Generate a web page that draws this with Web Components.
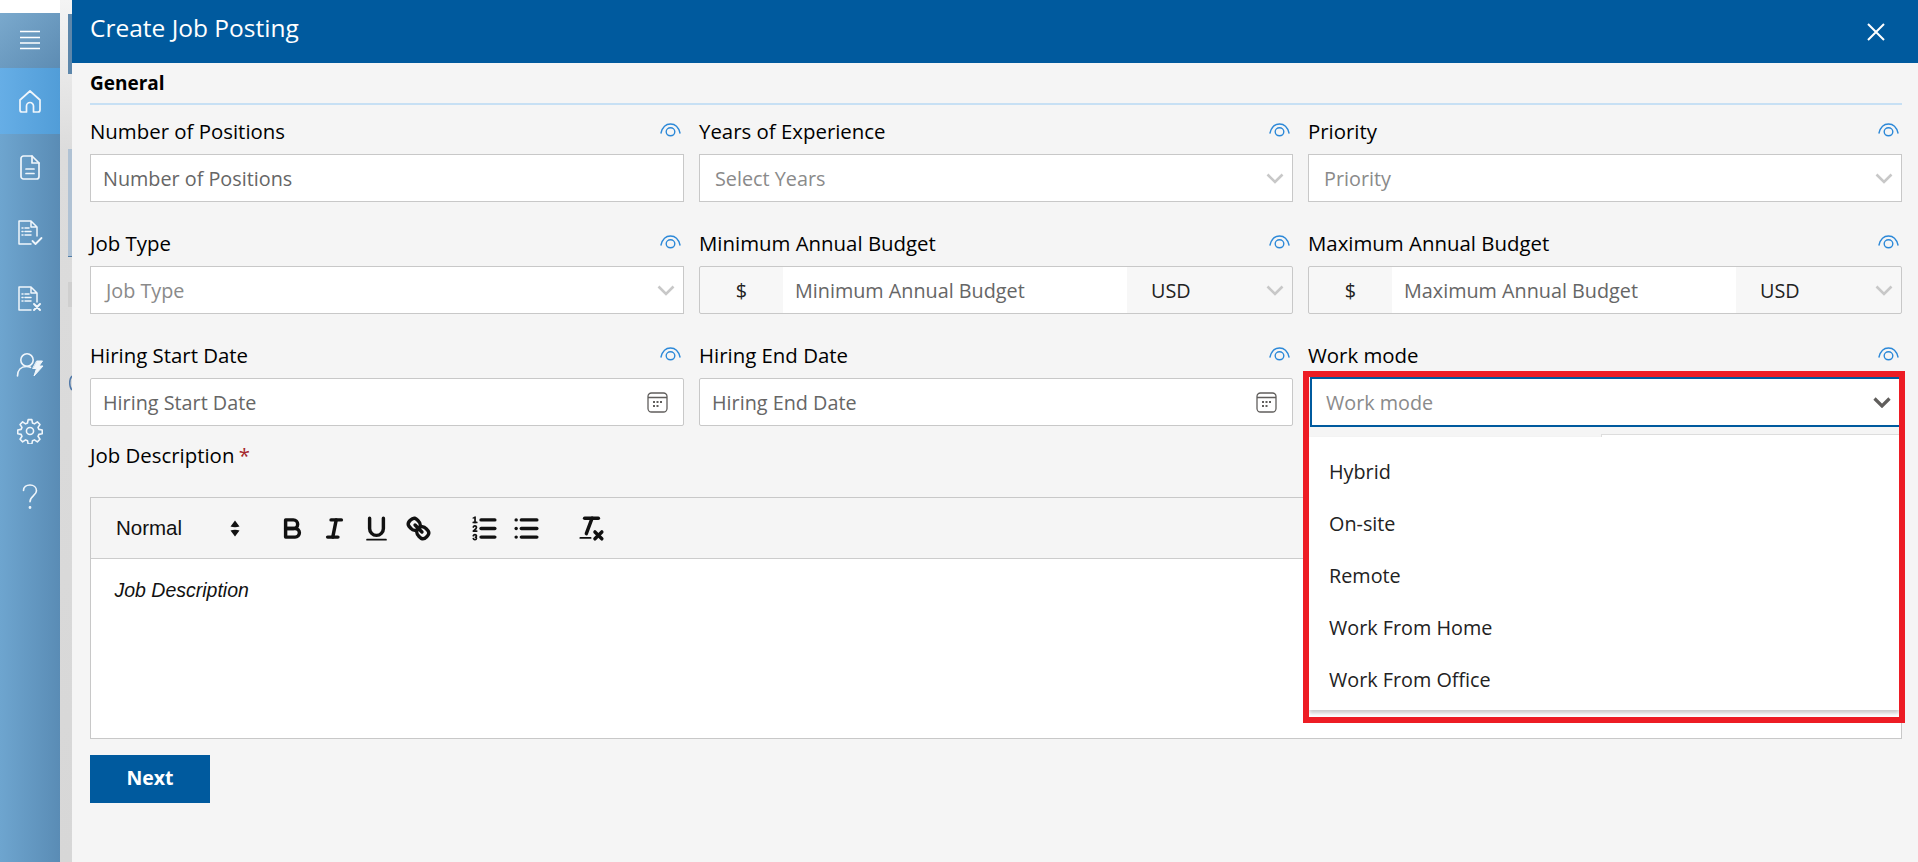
<!DOCTYPE html>
<html lang="en"><head><meta charset="utf-8"><title>Create Job Posting</title>
<style>
html,body{margin:0;height:100%;overflow:hidden;background:#fff}
body{font-family:"Open Sans","Noto Sans",sans-serif;font-size:19.8px;color:#111}
</style></head><body>
<job-app></job-app>
<script>
const S='fill="none" stroke="currentColor" stroke-linecap="round" stroke-linejoin="round"';
function def(name,css,html,init){
  customElements.define(name,class extends HTMLElement{
    constructor(){super();this.attachShadow({mode:'open'});}
    connectedCallback(){
      const g=a=>this.getAttribute(a)||'';
      this.shadowRoot.innerHTML='<style>'+css+'</style>'+(typeof html==='function'?html(g):html);
      if(init)init.call(this);
    }
  });
}
const ICONS={
 menu:'<svg width="22" height="20" viewBox="0 0 22 20" fill="none" stroke="currentColor" stroke-width="1.6" style="margin-top:-2px"><path d="M1 1.5h20M1 7.5h20M1 13h20M1 18.5h20"/></svg>',
 home:`<svg width="24" height="24" viewBox="0 0 24 24" ${S} stroke-width="1.7"><path d="M2 11 12 2l10 9v10a2 2 0 0 1-2 2h-4.500v-6a3.500 3.500 0 0 0-7 0v6H4a2 2 0 0 1-2-2z"/></svg>`,
 doc:`<svg width="20" height="25" viewBox="0 0 20 25" ${S} stroke-width="1.7"><path d="M12 1H3.500A2.500 2.500 0 0 0 1 3.500v18A2.500 2.500 0 0 0 3.500 24h13a2.500 2.500 0 0 0 2.500-2.500V8z"/><path d="M12 1v7h7M6 14h8M6 18.500h8"/></svg>`,
 check:`<svg width="26" height="26" viewBox="0 0 26 26" ${S} stroke-width="1.5"><path d="M14 1H2v23h12M14 1l6 6v9M14 1v6h6"/><path d="M5 8h1M8 8h4M5 11.500h1M8 11.500h6M5 15h1M8 15h6"/><path d="m15.500 21 3 3 6-6" stroke-width="1.800"/></svg>`,
 cross:`<svg width="26" height="26" viewBox="0 0 26 26" ${S} stroke-width="1.5"><path d="M14 1H2v23h12M14 1l6 6v9M14 1v6h6"/><path d="M5 8h1M8 8h4M5 11.500h1M8 11.500h6M5 15h1M8 15h6"/><path d="m17 18 6 6m0-6-6 6" stroke-width="2"/></svg>`,
 user:`<svg width="28" height="26" viewBox="0 0 28 26" ${S} stroke-width="1.6"><circle cx="11" cy="8" r="6.200"/><path d="M1.500 24c0-6 3.500-9.500 9-9.500 1.500 0 2.800.3 4 .8"/><path d="M21 9h5.500l-3.500 5h4l-9 10 2.500-7.500h-3.500z" fill="currentColor" stroke-width="1"/></svg>`,
 gear:`<svg width="26" height="26" viewBox="0 0 24 24" ${S} stroke-width="1.450"><circle cx="12" cy="12" r="3.300"/><path d="M10.300 1.500h3.400l.6 3.100 1.800.8 2.700-1.800 2.400 2.400-1.800 2.700.8 1.800 3.100.6v3.400l-3.100.6-.8 1.800 1.800 2.700-2.400 2.400-2.700-1.800-1.800.8-.6 3.100h-3.400l-.6-3.100-1.800-.8-2.700 1.800-2.400-2.400 1.800-2.700-.8-1.800-3.100-.6v-3.400l3.100-.6.800-1.800-1.800-2.700 2.400-2.400 2.700 1.800 1.800-.8z"/></svg>`,
 help:`<svg width="16" height="26" viewBox="0 0 16 26" ${S} stroke-width="1.6"><path d="M1.500 6.500C1.500 3 4.500 1 8 1s6.500 2.200 6.500 5.800c0 4.700-6.500 5.200-6.500 11"/><circle cx="8" cy="23.500" r=".6" fill="currentColor"/></svg>`,
 close:'<svg width="18" height="18" viewBox="0 0 18 18" fill="none" stroke="currentColor" stroke-width="2"><path d="m1 1 16 16M17 1 1 17"/></svg>',
 eye:'<svg width="21" height="14" viewBox="0 0 21 14" fill="none" stroke="#2b88d8" stroke-width="1.400" stroke-linecap="round"><path d="M1 10C2.500 4 6 1 10.500 1s8 3 9.500 9"/><ellipse cx="10.500" cy="8.800" rx="4.300" ry="4"/></svg>',
 cal:'<svg width="21" height="21" viewBox="0 0 21 21" fill="none" stroke="#605e5c" stroke-width="1.300"><rect x="1" y="1" width="19" height="19" rx="3.500"/><path d="M1 5.500h19"/><g fill="#605e5c" stroke="none"><rect x="6" y="9" width="2" height="2"/><rect x="9.500" y="9" width="2" height="2"/><rect x="13" y="9" width="2" height="2"/><rect x="6" y="13" width="2" height="2"/><rect x="9.500" y="13" width="2" height="2"/></g></svg>',
};
const chev=(c,w)=>`<svg width="18" height="11" viewBox="0 0 18 11" fill="none" stroke="${c}" stroke-width="${w||2.6}"><path d="m1.500 1.500 7.500 7.500 7.500-7.500"/></svg>`;
const Q=(inner)=>`<svg width="31" height="31" viewBox="0 0 18 18" fill="none" stroke="#111" stroke-width="2" stroke-linecap="round" stroke-linejoin="round">${inner}</svg>`;
const QL={
 bold:'<path d="M5,4H9.500A2.500,2.500,0,0,1,12,6.500v0A2.500,2.500,0,0,1,9.500,9H5V4Z"/><path d="M5,9h5.500A2.500,2.500,0,0,1,13,11.500v0A2.500,2.500,0,0,1,10.500,14H5V9Z"/>',
 italic:'<line x1="7" x2="13" y1="4" y2="4"/><line x1="5" x2="11" y1="14" y2="14"/><line x1="8" x2="10" y1="14" y2="4"/>',
 underline:'<path d="M5,3V9a4.012,4.012,0,0,0,4,4H9a4.012,4.012,0,0,0,4-4V3"/><rect fill="#111" stroke="none" height="1" rx=".5" ry=".5" width="12" x="3" y="15"/>',
 link:'<line x1="7" x2="11" y1="7" y2="11"/><path d="M8.900,4.577a3.476,3.476,0,0,1,.36,4.679A3.476,3.476,0,0,1,4.577,8.900C3.185,7.500,2.035,6.400,4.217,4.217S7.500,3.185,8.900,4.577Z"/><path d="M13.423,9.100a3.476,3.476,0,0,0-4.679-.36,3.476,3.476,0,0,0,.36,4.679c1.392,1.392,2.500,2.542,4.679.36S14.815,10.500,13.423,9.100Z"/>',
 ol:'<line x1="7" x2="15" y1="4" y2="4"/><line x1="7" x2="15" y1="9" y2="9"/><line x1="7" x2="15" y1="14" y2="14"/><line stroke-width="1" x1="2.500" x2="4.500" y1="5.500" y2="5.500"/><path fill="#111" stroke="none" d="M3.500,6A0.500,0.500,0,0,1,3,5.500V3.085l-0.276.138A0.500,0.500,0,0,1,2.053,3c-0.124-.247-0.023-0.324.224-0.447l1-.5A0.500,0.500,0,0,1,4,2.500v3A0.500,0.500,0,0,1,3.500,6Z"/><path stroke-width="1" d="M4.500,10.500h-2c0-.234,1.850-1.076,1.850-2.234A0.959,0.959,0,0,0,2.500,8.156"/><path stroke-width="1" d="M2.500,14.846a0.959,0.959,0,0,0,1.850-.109A0.700,0.700,0,0,0,3.750,14a0.688,0.688,0,0,0,.6-0.736,0.959,0.959,0,0,0-1.850-.109"/>',
 ul:'<line x1="6" x2="15" y1="4" y2="4"/><line x1="6" x2="15" y1="9" y2="9"/><line x1="6" x2="15" y1="14" y2="14"/><line x1="3" x2="3" y1="4" y2="4"/><line x1="3" x2="3" y1="9" y2="9"/><line x1="3" x2="3" y1="14" y2="14"/>',
 clean:'<line x1="5" x2="13" y1="3" y2="3"/><line x1="6" x2="9.350" y1="12" y2="3"/><line x1="11" x2="15" y1="11" y2="15"/><line x1="15" x2="11" y1="11" y2="15"/><rect fill="#111" stroke="none" height="1" rx=".5" ry=".5" width="7" x="2" y="14"/>',
};

def('nav-item',`
 :host{display:flex;align-items:center;justify-content:center;height:66px;color:#f0f6fb}
 :host([active]){background:linear-gradient(90deg,#66aee6,#519dd8)}
 :host([head]){height:55px;background:linear-gradient(135deg,#7aa9cd,#5d8cb3);color:#fff}
`,g=>ICONS[g('icon')]);

def('side-nav',`
 :host{display:block;width:60px;flex:none;margin-top:13px;background:linear-gradient(90deg,#6ea5cf,#5a8cb5)}
`,`<nav-item head icon="menu"></nav-item><nav-item active icon="home"></nav-item><nav-item icon="doc"></nav-item><nav-item icon="check"></nav-item><nav-item icon="cross"></nav-item><nav-item icon="user"></nav-item><nav-item icon="gear"></nav-item><nav-item icon="help"></nav-item>`);

def('back-gutter',`
 :host{display:flex;flex-direction:column;width:12px;flex:none;background:linear-gradient(180deg,#f4f4f4 0,#dcdcdc 150px,#d7d7d7 100%)}
 .a{height:14px}
 .r{margin-left:8px;background:#5d87ab;height:60px}
 .m{height:75px}
 .l{margin-left:8px;background:#b0c2d4;height:107px;border-bottom:1px solid #4f7ba5}
 .g{height:25px}
 .b{margin-left:8px;background:#cfcfcf;height:25px}
 .h{height:68px}
 svg{display:block;margin-left:8px}
`,`<div class="a"></div><div class="r"></div><div class="m"></div><div class="l"></div><div class="g"></div><div class="b"></div><div class="h"></div><svg width="4" height="16" viewBox="0 0 4 16" fill="none" stroke="#4f78a8" stroke-width="1.500"><path d="M4 1C1 4 1 12 4 15"/></svg>`);

def('panel-header',`
 :host{display:flex;align-items:center;justify-content:space-between;height:63px;background:#005a9e;color:#fff;padding:0 33px 6px 18px;box-sizing:border-box;flex:none}
 h1{margin:0;font:400 24.500px/1 "Open Sans",sans-serif}
 span{display:flex;margin-top:6px}
`,`<h1><slot></slot></h1><span>${ICONS.close}</span>`);

def('section-head',`
 :host{display:block;height:40px;border-bottom:2px solid #c7e0f4;font-weight:700;font-size:19px;line-height:41px;color:#000}
`,`<slot></slot>`);

def('form-field',`
 :host{display:block;position:relative}
 .l{display:flex;justify-content:space-between;align-items:center;height:38px;margin-bottom:4px;color:#000;padding-right:3px;font-size:20.400px}
 .l b{font-weight:400}
 .l span{display:flex;margin-top:-3px}
`,g=>`<div class="l"><b></b><span>${ICONS.eye}</span></div><slot></slot>`,function(){this.shadowRoot.querySelector('b').textContent=this.getAttribute('label');});

const boxCss=`
 :host{display:flex;align-items:center;height:48px;box-sizing:border-box;background:#fff;border:1.500px solid #c8c8c8;color:#666;overflow:hidden}
 .t{flex:1;white-space:nowrap}
 svg{flex:none}
`;
def('text-box',boxCss+':host{padding-left:12px}',g=>`<span class="t">${g('text')}</span>`);
def('date-box',boxCss+':host{padding:0 15px 0 12px;border-radius:2px}',g=>`<span class="t">${g('text')}</span>${ICONS.cal}`);
def('select-box',boxCss+':host{padding:0 8px 0 15px;color:#8a8a8a}:host([open]){border:2px solid #005a9e;border-right:0;padding:0 11px 0 14px;height:50px;margin-top:-1px;margin-left:2px}',g=>`<span class="t">${g('text')}</span>`,function(){const o=this.hasAttribute('open');this.shadowRoot.innerHTML+=chev(o?'#605e5c':'#c8c8c8',o?3.2:2.6);});
def('money-box',boxCss+`
 :host{background:#f7f7f7;border-radius:2px}
 .c{width:83px;text-align:center;color:#222;flex:none}
 .i{width:344px;flex:none;background:#fff;align-self:stretch;display:flex;align-items:center;padding-left:12px;box-sizing:border-box;white-space:nowrap}
 .u{flex:1;padding-left:24px;color:#222}
 svg{margin-right:8px}
`,g=>`<span class="c">$</span><span class="i">${g('text')}</span><span class="u">USD</span>${chev('#c8c8c8')}`);

def('rich-editor',`
 :host{display:block;height:242px;box-sizing:border-box;border:1.500px solid #c8c8c8;background:#fff;font-family:"Liberation Sans",Arial,sans-serif;font-size:20.500px;color:#111}
 .tb{display:flex;align-items:center;height:61px;box-sizing:border-box;background:#f5f5f5;border-bottom:1.500px solid #ccc;padding-left:25px}
 .p{width:130px;display:flex;justify-content:space-between;align-items:center;padding-right:6px;box-sizing:border-box;margin-right:31px}
 .g{display:flex;gap:11px;margin-right:35px}
 .g svg{display:block}
 .e{padding:19px 0 0 23.500px;font-style:italic;line-height:24px;font-size:19.500px}
`,`<div class="tb"><div class="p"><span>Normal</span><svg width="10" height="17" viewBox="0 0 10 17" fill="#111"><path d="M5 .5 9.500 6.500Q5 8 .5 6.500zM5 16.500.5 10.500Q5 9 9.500 10.500z"/></svg></div>
 <div class="g">${Q(QL.bold)}${Q(QL.italic)}${Q(QL.underline)}${Q(QL.link)}</div>
 <div class="g" style="margin-right:34px">${Q(QL.ol)}${Q(QL.ul)}</div>
 <div class="g">${Q(QL.clean)}</div></div><div class="e">Job Description</div>`);

def('drop-menu',`
 :host{display:block;position:absolute;left:1px;top:101px;width:590px;height:273px;background:#fff;box-shadow:0 3px 4px rgba(0,0,0,.22);padding-top:8px;box-sizing:border-box;z-index:2}
 :host::before{content:"";position:absolute;left:292px;right:0;top:-3px;height:3px;background:#fff;border:1px solid #ddd;border-width:1px 0 0 1px;box-sizing:border-box}
 ::slotted(*){display:flex;align-items:center;height:52px;padding-left:20px;color:#222}
`,`<slot></slot>`);

def('red-frame',`
 :host{display:block;position:absolute;left:-5px;top:35px;width:602px;height:352px;box-sizing:border-box;border:6px solid #ed1c24;z-index:3;pointer-events:none}
`,``);

def('btn-primary',`
 :host{display:flex;align-items:center;justify-content:center;width:120px;height:48px;background:#005a9e;color:#fff;font-weight:700;margin-top:16px;padding-bottom:3px;box-sizing:border-box;font-size:19.500px}
`,`<slot></slot>`);

def('form-grid',`
 :host{display:grid;grid-template-columns:repeat(3,594px);column-gap:15px;row-gap:22px;grid-auto-rows:90px;margin-top:7px}
`,`<slot></slot>`);

def('desc-label',`
 :host{display:block;height:71px;line-height:59px;color:#000;font-size:20.400px}
 i{font-style:normal;color:#a4262c;margin-left:-1px}
`,`<slot></slot> <i>*</i>`);

def('job-panel',`
 :host{display:flex;flex-direction:column;flex:1;background:#f5f5f5;min-width:0}
 .b{padding:0 16px 0 18px}
`,`<panel-header>Create Job Posting</panel-header><div class="b">
 <section-head>General</section-head>
 <form-grid>
  <form-field label="Number of Positions"><text-box text="Number of Positions"></text-box></form-field>
  <form-field label="Years of Experience"><select-box text="Select Years"></select-box></form-field>
  <form-field label="Priority"><select-box text="Priority"></select-box></form-field>
  <form-field label="Job Type"><select-box text="Job Type"></select-box></form-field>
  <form-field label="Minimum Annual Budget"><money-box text="Minimum Annual Budget"></money-box></form-field>
  <form-field label="Maximum Annual Budget"><money-box text="Maximum Annual Budget"></money-box></form-field>
  <form-field label="Hiring Start Date"><date-box text="Hiring Start Date"></date-box></form-field>
  <form-field label="Hiring End Date"><date-box text="Hiring End Date"></date-box></form-field>
  <form-field label="Work mode"><select-box open text="Work mode"></select-box>
   <drop-menu><div>Hybrid</div><div>On-site</div><div>Remote</div><div>Work From Home</div><div>Work From Office</div></drop-menu>
   <red-frame></red-frame>
  </form-field>
 </form-grid>
 <desc-label>Job Description</desc-label>
 <rich-editor></rich-editor>
 <btn-primary>Next</btn-primary>
</div>`);

def('job-app',`
 :host{display:flex;height:862px;width:1918px;overflow:hidden}
`,`<side-nav></side-nav><back-gutter></back-gutter><job-panel></job-panel>`);
</script>
</body></html>
